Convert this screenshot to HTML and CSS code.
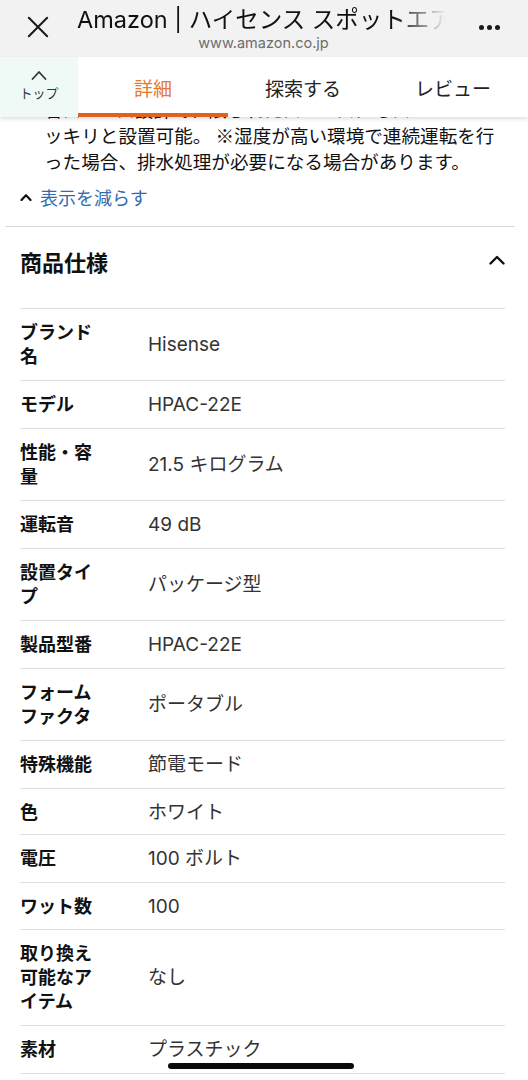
FILE: index.html
```html
<!DOCTYPE html>
<html lang="ja">
<head>
<meta charset="utf-8">
<title>Amazon | ハイセンス スポットエアコン</title>
<link rel="stylesheet" href="styles.css">
</head>
<body>
<div class="phone">
  <header class="topbar">
    <svg class="close" viewBox="0 0 24 24"><path d="M2 2 L22 22 M22 2 L2 22" fill="none" stroke="#1a1a1a" stroke-width="2.2" stroke-linecap="round"/></svg>
    <div class="titles">
      <div class="title">Amazon | ハイセンス スポットエア</div>
      <div class="url">www.amazon.co.jp</div>
    </div>
    <div class="more"><span class="dot"></span><span class="dot"></span><span class="dot"></span></div>
  </header>

  <nav class="tabs">
    <div class="top-btn">
      <svg class="top-chev" viewBox="0 0 16 10"><path d="M1.5 9 L8 2 L14.5 9" fill="none" stroke="#333" stroke-width="1.8" stroke-linecap="round" stroke-linejoin="round"/></svg>
      <span class="top-label">トップ</span>
    </div>
    <div class="tab active">詳細</div>
    <div class="tab">探索する</div>
    <div class="tab">レビュー</div>
  </nav>

  <main class="content">
    <div class="desc-clip">
      <p class="desc">省スペース設計で、限られたスペースにもス<br>ッキリと設置可能。 ※湿度が高い環境で連続運転を行<br>った場合、排水処理が必要になる場合があります。</p>
    </div>
    <div class="less">
      <svg class="less-chev" viewBox="0 0 12 8"><path d="M1.5 7 L6 2.2 L10.5 7" fill="none" stroke="#111" stroke-width="2.2" stroke-linecap="round" stroke-linejoin="round"/></svg>
      <span>表示を減らす</span>
    </div>

    <section class="spec">
      <div class="spec-head">
        <h2 class="spec-title">商品仕様</h2>
        <svg class="spec-chev" viewBox="0 0 16 10"><path d="M1.5 8.5 L8 2 L14.5 8.5" fill="none" stroke="#111" stroke-width="2.4" stroke-linecap="round" stroke-linejoin="round"/></svg>
      </div>
      <div class="spec-table">
        <div class="row"><div class="label">ブランド名</div><div class="value">Hisense</div></div>
        <div class="row"><div class="label">モデル</div><div class="value">HPAC-22E</div></div>
        <div class="row"><div class="label">性能・容量</div><div class="value">21.5 キログラム</div></div>
        <div class="row"><div class="label">運転音</div><div class="value">49 dB</div></div>
        <div class="row"><div class="label">設置タイプ</div><div class="value">パッケージ型</div></div>
        <div class="row"><div class="label">製品型番</div><div class="value">HPAC-22E</div></div>
        <div class="row"><div class="label">フォームファクタ</div><div class="value">ポータブル</div></div>
        <div class="row"><div class="label">特殊機能</div><div class="value">節電モード</div></div>
        <div class="row tight"><div class="label">色</div><div class="value">ホワイト</div></div>
        <div class="row"><div class="label">電圧</div><div class="value">100 ボルト</div></div>
        <div class="row snug"><div class="label">ワット数</div><div class="value">100</div></div>
        <div class="row"><div class="label">取り換え可能なアイテム</div><div class="value">なし</div></div>
        <div class="row"><div class="label">素材</div><div class="value">プラスチック</div></div>
      </div>
    </section>
  </main>

  <div class="home-indicator"></div>
</div>
</body>
</html>
```

FILE: styles.css
```css
* { box-sizing: border-box; }

body {
  margin: 0;
  background: #ffffff;
  font-family: Inter, "Noto Sans CJK JP", sans-serif;
  color: #111111;
}

.phone {
  width: 528px;
  height: 1080px;
  overflow: hidden;
  position: relative;
  background: #ffffff;
}

/* ---------- browser top bar ---------- */
.topbar {
  height: 57px;
  background: #f2f2f2;
  display: flex;
  align-items: flex-start;
}

.close {
  flex: none;
  width: 22px;
  height: 22px;
  margin: 16px 0 0 27px;
}

.titles {
  flex: 1;
  min-width: 0;
  margin-left: 28px;
  padding-top: 6px;
}

.title {
  font-size: 23.5px;
  line-height: 27px;
  white-space: nowrap;
  overflow: hidden;
  color: #111111;
  -webkit-mask-image: linear-gradient(to right, #000 85%, transparent 99%);
  mask-image: linear-gradient(to right, #000 85%, transparent 99%);
}

.url {
  margin-top: 1px;
  font-size: 14.5px;
  line-height: 18px;
  color: #6d6d6d;
  text-align: center;
}

.more {
  flex: none;
  width: 78px;
  display: flex;
  justify-content: center;
  gap: 3px;
  padding-top: 25px;
}

.dot {
  width: 5px;
  height: 5px;
  border-radius: 50%;
  background: #1a1a1a;
}

/* ---------- tabs ---------- */
.tabs {
  position: relative;
  z-index: 2;
  height: 60px;
  display: flex;
  background: #ffffff;
  box-shadow: 0 2px 4px rgba(0, 0, 0, 0.13);
}

.top-btn {
  flex: none;
  width: 78px;
  background: #effaf7;
  display: flex;
  flex-direction: column;
  align-items: center;
  padding-top: 13px;
}

.top-chev {
  width: 16px;
  height: 10px;
}

.top-label {
  margin-top: 5px;
  font-size: 13px;
  line-height: 16px;
  color: #333333;
}

.tab {
  flex: 1;
  position: relative;
  display: flex;
  align-items: center;
  justify-content: center;
  font-size: 19px;
  color: #222222;
}

.tab.active {
  color: #e4792f;
}

.tab.active::after {
  content: "";
  position: absolute;
  left: 0;
  right: 0;
  bottom: 0;
  height: 4px;
  background: #e2611c;
}

/* ---------- content ---------- */
.content {
  padding: 0 20px;
}

.desc-clip {
  overflow: hidden;
}

.desc {
  margin: -21px 0 0;
  padding-left: 24px;
  font-family: "Noto Sans CJK JP", sans-serif;
  font-size: 18.6px;
  line-height: 26px;
  white-space: nowrap;
  color: #111111;
}

.less {
  margin-top: 10px;
  height: 26px;
  display: flex;
  align-items: center;
  gap: 8px;
  font-size: 18px;
  color: #2f6db3;
}

.less-chev {
  width: 12px;
  height: 8px;
}

.spec {
  margin: 16px -7px 0 -15px;
  padding: 0 10px 0 15px;
  border-top: 1px solid #d9d9d9;
}

.spec-head {
  display: flex;
  align-items: center;
  justify-content: space-between;
  padding: 22px 0 31px;
}

.spec-title {
  margin: 0;
  font-size: 22px;
  line-height: 28px;
  font-weight: bold;
  color: #111111;
}

.spec-chev {
  width: 16px;
  height: 10px;
  margin-top: -6px;
}

.spec-table {
  border-top: 1px solid #dedede;
}

.row {
  display: grid;
  grid-template-columns: 80px 1fr;
  column-gap: 48px;
  align-items: center;
  padding: 12px 0 11px;
  border-bottom: 1px solid #dedede;
  line-height: 24px;
}

.row.tight {
  padding-bottom: 9px;
}

.row.snug {
  padding-bottom: 10px;
}

.label {
  font-size: 18px;
  font-weight: bold;
  color: #111111;
}

.value {
  font-size: 19px;
  color: #333333;
}

.home-indicator {
  position: absolute;
  left: 168px;
  top: 1063px;
  width: 186px;
  height: 6px;
  border-radius: 3px;
  background: #0a0a0a;
}
```
